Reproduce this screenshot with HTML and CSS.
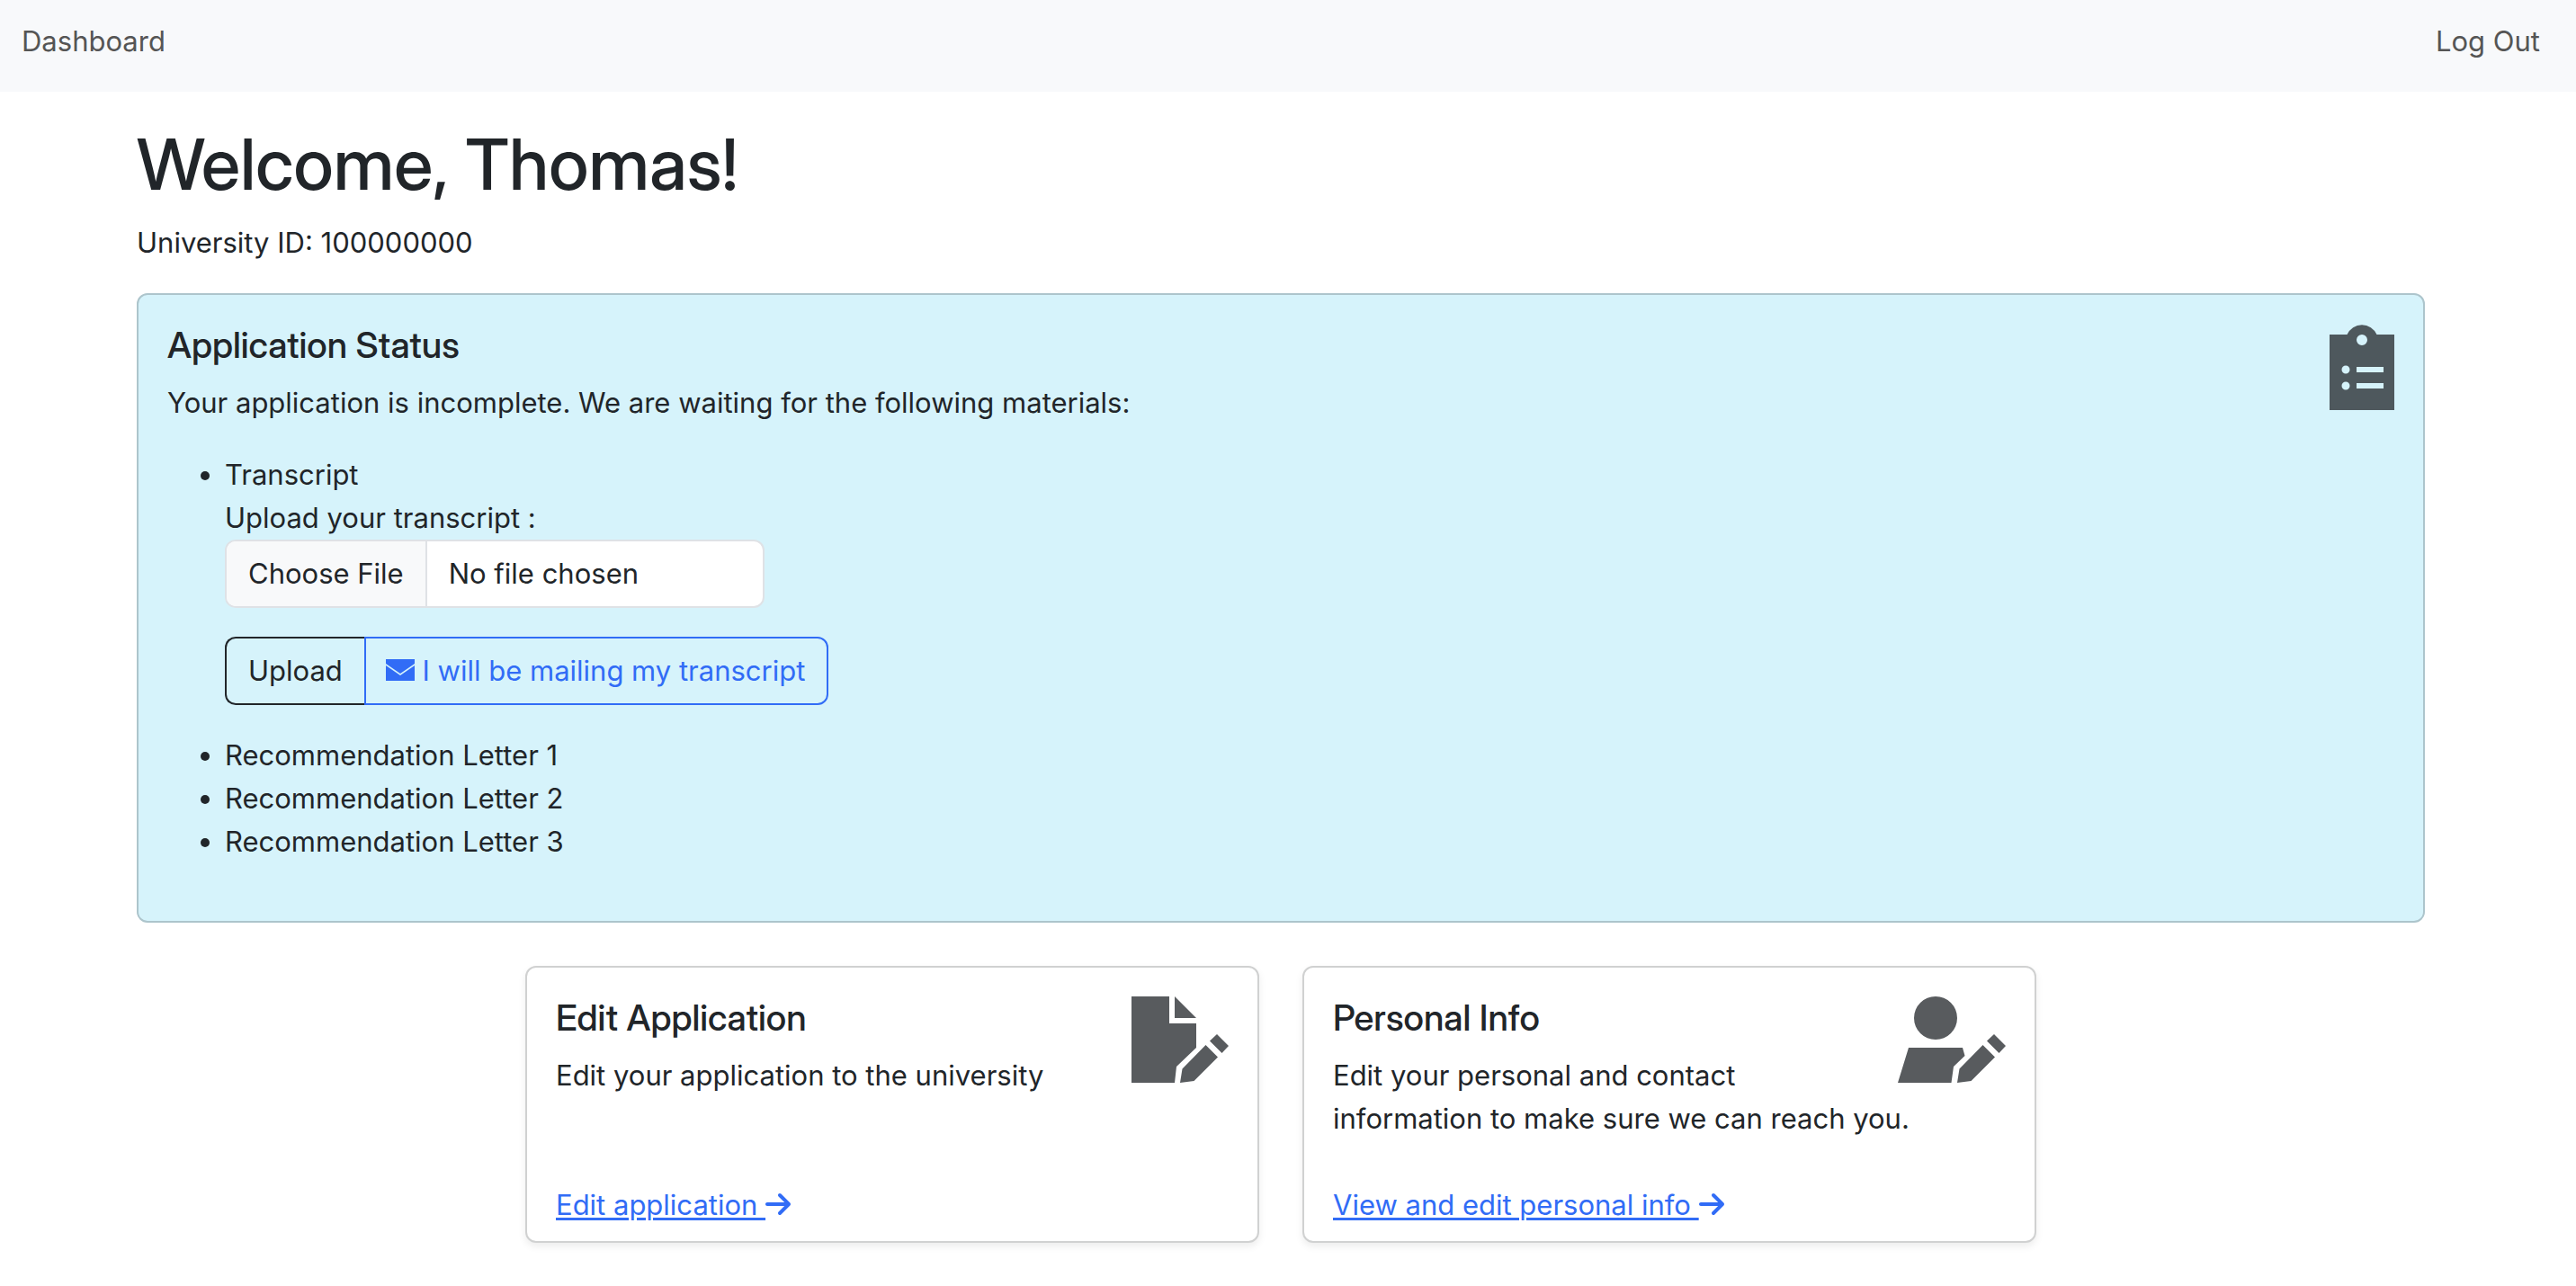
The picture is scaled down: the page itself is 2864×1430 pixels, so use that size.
FILE: index.html
```html
<!DOCTYPE html>
<html lang="en">
<head>
<meta charset="utf-8">
<meta name="viewport" content="width=device-width, initial-scale=1">
<title>Dashboard</title>
<link rel="stylesheet" href="styles.css">
</head>
<body>
<nav class="navbar">
  <a class="nav-link" href="#">Dashboard</a>
  <a class="nav-link" href="#">Log Out</a>
</nav>
<main class="container">
  <h1 class="welcome">Welcome, Thomas!</h1>
  <p class="text">University ID: 100000000</p>

  <section class="card status">
    <svg class="card-icon" width="72" height="96" viewBox="0 0 72 96" aria-hidden="true">
      <path fill-rule="evenodd" d="M0 12H19.500A18 18 0 0 1 52.500 12H72V96H0ZM36 12a6 6 0 1 0 0 12a6 6 0 1 0 0-12ZM18 46.500a4.500 4.500 0 1 0 0 9a4.500 4.500 0 1 0 0-9ZM18 64.500a4.500 4.500 0 1 0 0 9a4.500 4.500 0 1 0 0-9ZM30 48H60V54H30ZM30 66H60V72H30Z"/>
    </svg>
    <h2 class="card-title">Application Status</h2>
    <p class="text">Your application is incomplete. We are waiting for the following materials:</p>
    <ul class="materials">
      <li>Transcript
        <form class="upload">
          <label for="transcript">Upload your transcript :</label>
          <input class="file" id="transcript" type="file">
          <div class="btn-group">
            <button class="btn btn-dark" type="submit">Upload</button>
            <button class="btn btn-primary" type="button"><svg class="mail" viewBox="0 0 32 24" aria-hidden="true"><path d="M0 0H32V5L16 16L0 5ZM0 7L16 18L32 7V24H0Z"/></svg> I will be mailing my transcript</button>
          </div>
        </form>
      </li>
      <li>Recommendation Letter 1</li>
      <li>Recommendation Letter 2</li>
      <li>Recommendation Letter 3</li>
    </ul>
  </section>

  <div class="tiles">
    <section class="card tile">
      <div class="tile-body">
        <svg class="card-icon" width="108" height="96" viewBox="0 0 108 96" aria-hidden="true">
          <path d="M0 0H42V30H72V57L50 78L48 96H0ZM48 0L72 24H48ZM82.500 54L96 67.500L69.500 94L54 96L56.500 80.500ZM87 49.500L95 42L108 55L100.500 63Z"/>
        </svg>
        <h2 class="card-title">Edit Application</h2>
        <p class="text">Edit your application to the university</p>
      </div>
      <a class="link" href="#">Edit application <svg class="arrow" viewBox="0 0 448 512" aria-hidden="true"><path d="M438.600 278.600c12.500-12.500 12.500-32.800 0-45.300l-160-160c-12.500-12.500-32.800-12.500-45.300 0s-12.500 32.800 0 45.300L338.800 224 32 224c-17.700 0-32 14.300-32 32s14.300 32 32 32l306.700 0L233.400 393.400c-12.500 12.500-12.500 32.800 0 45.300s32.800 12.500 45.300 0l160-160z"/></svg></a>
    </section>
    <section class="card tile">
      <div class="tile-body">
        <svg class="card-icon" width="120" height="96" viewBox="0 0 120 96" aria-hidden="true">
          <path d="M42 0a24 24 0 1 0 0 48a24 24 0 1 0 0-48ZM12 57H72L74.500 66L62 78L59.500 96H0ZM94.500 54L108 67.500L81.500 94L66 96L68.500 80.500ZM99 49.500L107 42L120 55L112.500 63Z"/>
        </svg>
        <h2 class="card-title">Personal Info</h2>
        <p class="text">Edit your personal and contact information to make sure we can reach you.</p>
      </div>
      <a class="link" href="#">View and edit personal info <svg class="arrow" viewBox="0 0 448 512" aria-hidden="true"><path d="M438.600 278.600c12.500-12.500 12.500-32.800 0-45.300l-160-160c-12.500-12.500-32.800-12.500-45.300 0s-12.500 32.800 0 45.300L338.800 224 32 224c-17.700 0-32 14.300-32 32s14.300 32 32 32l306.700 0L233.400 393.400c-12.500 12.500-12.500 32.800 0 45.300s32.800 12.500 45.300 0l160-160z"/></svg></a>
    </section>
  </div>
</main>
</body>
</html>
```
FILE: styles.css
```css
*, *::before, *::after {
  box-sizing: border-box;
}

body {
  margin: 0;
  padding-right: 16px;
  background: #fff;
  color: #212529;
  font-family: Inter, "Liberation Sans", sans-serif;
  font-size: 31px;
  line-height: 48px;
}

h1, h2, p {
  margin: 0;
}

h1, h2 {
  font-family: "Inter Display", Inter, "Liberation Sans", sans-serif;
  font-weight: 500;
}

.navbar {
  display: flex;
  justify-content: space-between;
  margin-right: -16px;
  padding: 22px 40px 32px 24px;
  background: #f8f9fb;
}

.nav-link {
  color: #555;
  text-decoration: none;
}

.container {
  max-width: 2640px;
  margin: 0 auto;
  padding: 32px 48px;
}

.welcome {
  margin-bottom: 16px;
  font-size: 79px;
  line-height: 96px;
}

.text {
  margin-bottom: 32px;
}

.card {
  padding: 32px;
  border: 2px solid #d0d1d1;
  border-radius: 12px;
  background: #fff;
}

.card-title {
  margin-bottom: 16px;
  font-size: 40px;
  line-height: 48px;
}

.card-icon {
  float: right;
  margin-left: 16px;
  fill: #212529;
  opacity: 0.75;
}

.status {
  border-color: #adc5cc;
  background: #d6f3fb;
}

.materials {
  margin: 0 0 32px;
  padding-left: 64px;
}

.upload {
  display: flex;
  flex-direction: column;
  align-items: flex-start;
  padding-bottom: 32px;
}

.file {
  width: 600px;
  max-width: 100%;
  height: 76px;
  margin-bottom: 32px;
  border: 2px solid #dfe2e6;
  border-radius: 12px;
  background: #fff;
  color: #212529;
  font: inherit;
}

.file::file-selector-button {
  height: 72px;
  margin: 0 24px 0 0;
  padding: 0 24px;
  border: 0;
  border-right: 2px solid #dfe2e6;
  background: #f8f9fa;
  color: #212529;
  font: inherit;
}

.btn-group {
  display: flex;
}

.btn {
  padding: 12px 24px;
  border: 2px solid;
  border-radius: 12px;
  background: transparent;
  font: inherit;
}

.btn-dark {
  border-right: 0;
  border-top-right-radius: 0;
  border-bottom-right-radius: 0;
  color: #212529;
}

.btn-primary {
  padding-left: 22px;
  border-top-left-radius: 0;
  border-bottom-left-radius: 0;
  color: #316cf6;
}

.mail {
  width: 32px;
  height: 24px;
  fill: currentColor;
}

.tiles {
  display: flex;
  flex-wrap: wrap;
  justify-content: center;
  gap: 48px;
  margin-top: 48px;
}

.tile {
  display: flex;
  flex-direction: column;
  width: 816px;
  padding-bottom: 16px;
  box-shadow: 0 4px 8px rgba(0, 0, 0, 0.075);
}

.tile-body {
  flex: 1;
  padding-bottom: 16px;
}

.link {
  color: #316cf6;
  text-decoration-thickness: 3px;
  text-underline-offset: 3px;
}

.arrow {
  width: 28px;
  height: 32px;
  fill: currentColor;
  vertical-align: -4px;
}
```
